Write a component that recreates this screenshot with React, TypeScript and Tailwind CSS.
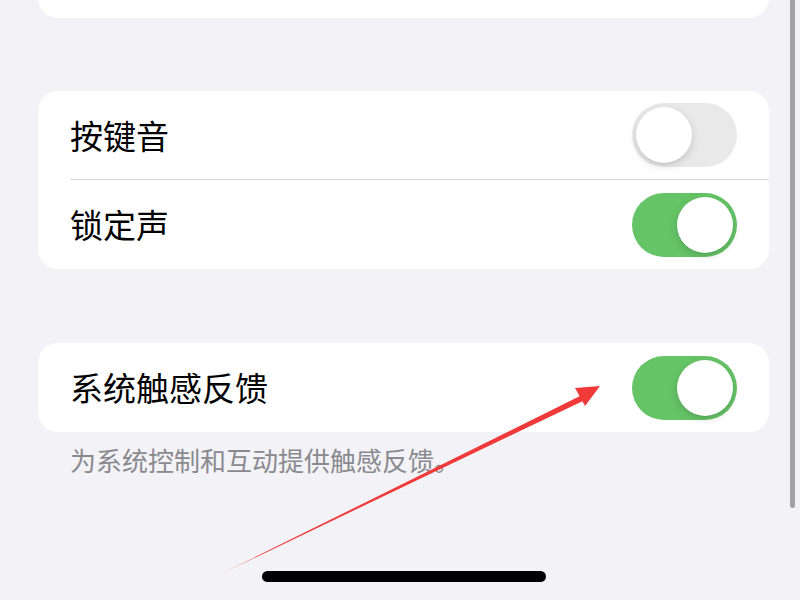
import { useState } from 'react'

type Row = {
  label: string
  on: boolean
}

const SOUND_ROWS: Row[] = [
  { label: '按键音', on: false },
  { label: '锁定声', on: true },
]

function Toggle({ on, onChange }: { on: boolean; onChange: () => void }) {
  return (
    <button
      onClick={onChange}
      className={`flex h-[64px] w-[105px] shrink-0 items-center rounded-full p-[4px] ${
        on ? 'justify-end bg-[#65c466]' : 'justify-start bg-[#e9e9ea]'
      }`}
    >
      <span className="block h-[56px] w-[56px] rounded-full bg-white shadow-[0_3px_8px_rgba(0,0,0,0.15),0_1px_1px_rgba(0,0,0,0.06)]" />
    </button>
  )
}

function SettingRow({ row, onToggle, divider }: { row: Row; onToggle: () => void; divider?: boolean }) {
  return (
    <div className="flex h-[89px] items-center pl-[32px]">
      <div
        className={`flex h-full flex-1 items-center justify-between pr-[32px] ${
          divider ? 'border-b border-[#d8d8dc]' : ''
        }`}
      >
        <span className="text-[33px] leading-none text-black">{row.label}</span>
        <Toggle on={row.on} onChange={onToggle} />
      </div>
    </div>
  )
}

export default function App() {
  const [sounds, setSounds] = useState(SOUND_ROWS)
  const [haptics, setHaptics] = useState(true)

  return (
    <div
      className="relative h-[600px] w-[800px] overflow-hidden bg-[#f2f2f7]"
      style={{ fontFamily: '"Noto Sans CJK SC", "Noto Sans", sans-serif' }}
    >
      <div className="flex flex-col pl-[38px] pr-[31px]">
        {/* bottom of the previous group, scrolled off */}
        <div className="-mt-[40px] h-[58px] rounded-[20px] bg-white" />

        <div className="mt-[73px] rounded-[20px] bg-white">
          {sounds.map((row, i) => (
            <SettingRow
              key={row.label}
              row={row}
              divider={i < sounds.length - 1}
              onToggle={() =>
                setSounds(sounds.map((r, j) => (j === i ? { ...r, on: !r.on } : r)))
              }
            />
          ))}
        </div>

        <div className="mt-[74px] rounded-[20px] bg-white">
          <SettingRow row={{ label: '系统触感反馈', on: haptics }} onToggle={() => setHaptics(!haptics)} />
        </div>
        <p className="mt-[13px] pl-[32px] text-[26px] leading-[30px] text-[#8a8a8e]">
          为系统控制和互动提供触感反馈。
        </p>
      </div>

      {/* scroll indicator */}
      <div className="absolute left-[790px] top-0 h-[508px] w-[5px] rounded-b-full bg-[#a1a1a6]" />

      {/* home indicator */}
      <div className="absolute left-[262px] top-[571px] h-[11px] w-[284px] rounded-full bg-black" />

      {/* annotation arrow */}
      <svg className="pointer-events-none absolute left-0 top-0" width="800" height="600" viewBox="0 0 800 600">
        <polygon points="225,572 582,395 585,400" fill="#f03a3a" />
        <polygon points="600,386 575,388 585,406" fill="#f03a3a" />
      </svg>
    </div>
  )
}
